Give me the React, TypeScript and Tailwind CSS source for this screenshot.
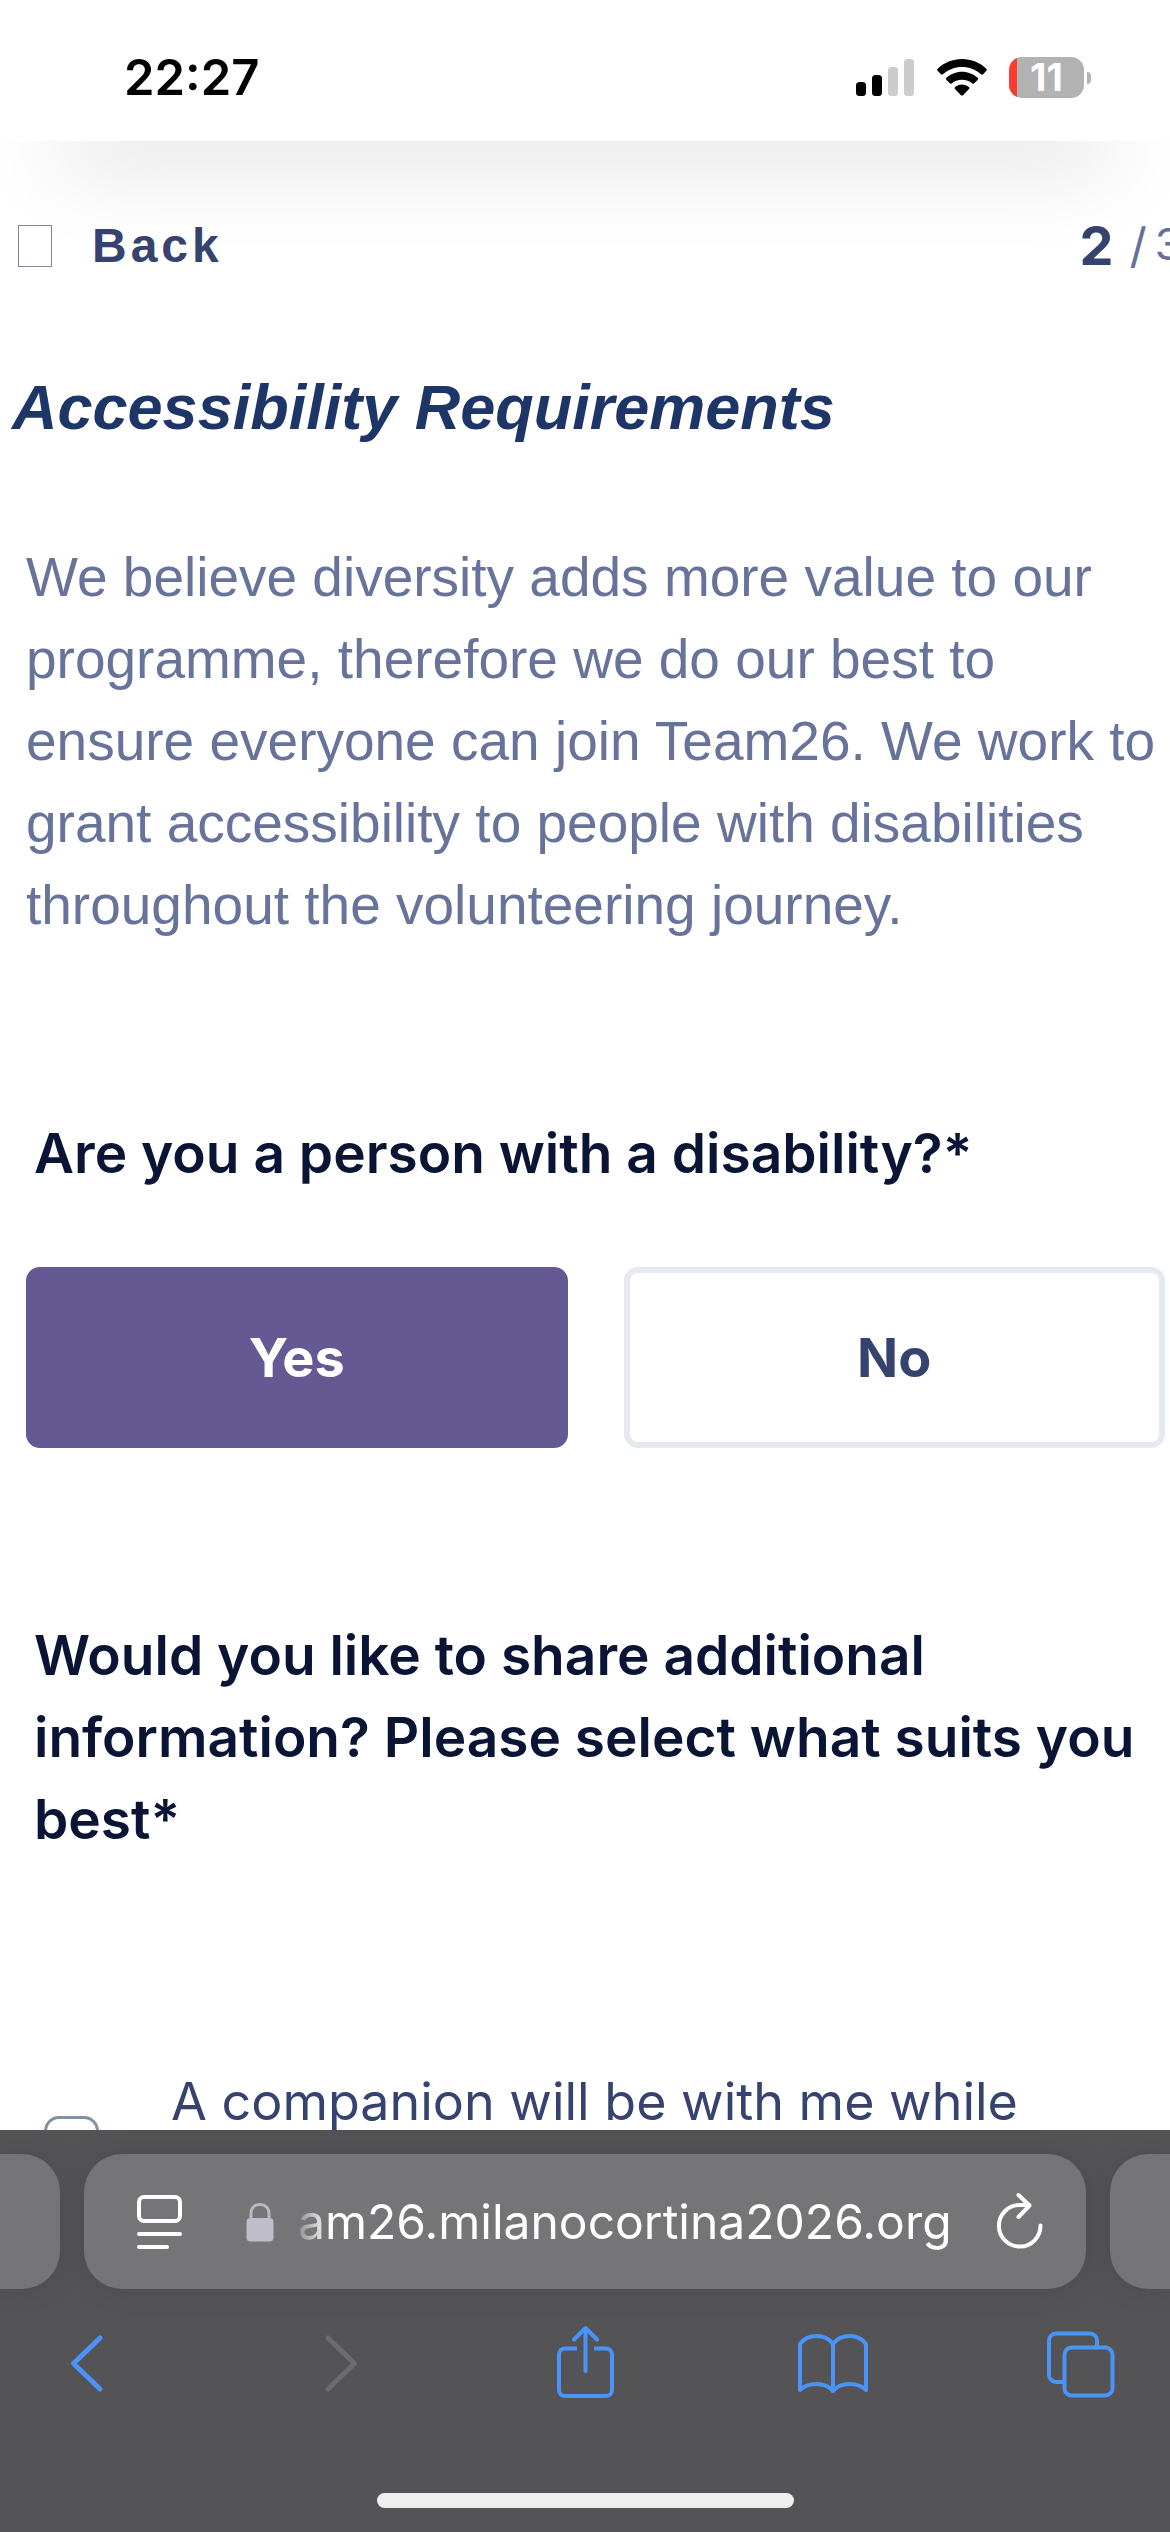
import React, { useState } from 'react';

const StatusBar: React.FC = () => (
  <header className="relative z-10 h-[141px] shrink-0 bg-white flex items-center justify-between pl-[124px] pr-[79px] pt-[14px] shadow-[0_70px_90px_-60px_rgba(0,0,0,0.32)]">
    <span className="text-[49px] leading-[60px] font-semibold text-black">22:27</span>
    <div className="flex items-center">
      {/* Signal */}
      <svg width="58" height="38" viewBox="0 0 58 38" className="mr-[23px]">
        <rect x="0" y="23" width="10" height="14" rx="3.5" fill="#000" />
        <rect x="16" y="16" width="10" height="21" rx="3.5" fill="#000" />
        <rect x="32" y="8" width="10" height="29" rx="3.5" fill="#ccc" />
        <rect x="48" y="0" width="10" height="37" rx="3.5" fill="#ccc" />
      </svg>
      {/* Wifi */}
      <svg width="50" height="38" viewBox="0 0 50 38" className="mr-[22px]">
        <path d="M25 0c9.300 0 17.900 3.600 24.300 9.700.7.600.7 1.500.1 2.100l-3.300 3.400c-.6.600-1.400.6-2 .1C39 10.600 32.300 8 25 8S11 10.600 5.900 15.300c-.6.500-1.400.5-2-.1L.6 11.800c-.6-.6-.6-1.500.1-2.100C7.100 3.600 15.700 0 25 0z" />
        <path d="M25 12.700c6 0 11.500 2.300 15.600 6.100.6.600.6 1.500 0 2.100l-3.400 3.400c-.5.500-1.300.5-1.900.1-2.700-2.400-6.300-3.700-10.300-3.700s-7.600 1.300-10.300 3.700c-.6.400-1.400.4-1.900-.1l-3.400-3.400c-.6-.6-.6-1.500 0-2.100 4.100-3.800 9.600-6.100 15.600-6.100z" />
        <path d="M25 25.500c2.600 0 5 .9 6.900 2.400.7.600.7 1.400.1 2L26 36.300c-.6.600-1.400.6-2 0L18 29.900c-.6-.6-.6-1.400.1-2 1.900-1.500 4.300-2.400 6.900-2.400z" />
      </svg>
      {/* Battery */}
      <div className="h-[41px] w-[75px] rounded-[13px] bg-linear-to-r from-[#ff3b30] from-[8px] to-[#b2b2b2] to-[8px] flex items-center justify-center">
        <span className="text-[38px] leading-[41px] font-bold text-white">11</span>
      </div>
      <div className="ml-[3px] h-3 w-1 rounded-r-full bg-[#b2b2b2]" />
    </div>
  </header>
);

interface ChoiceButtonProps {
  label: string;
  selected: boolean;
  onClick: () => void;
}

const ChoiceButton: React.FC<ChoiceButtonProps> = ({ label, selected, onClick }) => (
  <button
    type="button"
    aria-pressed={selected}
    onClick={onClick}
    className={`h-[181px] rounded-[14px] border-[6px] text-[54px] leading-[82px] font-bold ${
      selected ? 'border-[#655993] bg-[#655993] text-white' : 'border-[#e5eaf0] bg-white text-[#36436f]'
    }`}
  >
    {label}
  </button>
);

const BrowserBar: React.FC = () => (
  <footer className="shrink-0 bg-[#545456] pt-6 pb-6">
    <div className="flex gap-6">
      <div className="h-[135px] w-[60px] rounded-r-[38px] bg-[#757577] shadow-[0_0_30px_rgba(0,0,0,0.1)]" />
      <div className="h-[135px] flex-1 min-w-0 rounded-[38px] bg-[#757577] shadow-[0_0_30px_rgba(0,0,0,0.1)] flex items-center pl-[52px] pr-[42px]">
        <button type="button" aria-label="Page menu" className="mr-[62px]">
          <svg width="48" height="56" viewBox="0 0 48 56" fill="none" stroke="#fff" strokeWidth="4" strokeLinecap="round">
            <rect x="3" y="3" width="41" height="24" rx="5" />
            <path d="M3 40h41M3 53h28" />
          </svg>
        </button>
        <svg width="28" height="40" viewBox="0 0 28 40" className="mr-6 shrink-0">
          <path d="M5 18v-6.500C5 5.500 9 2.500 14 2.500s9 3 9 9V18" fill="none" stroke="#b9b8c0" strokeWidth="3" />
          <rect x="0.500" y="16" width="27" height="23.500" rx="4" fill="#bfbdca" />
        </svg>
        <button
          type="button"
          className="flex-1 min-w-0 text-left whitespace-nowrap text-[48px] leading-[64px] text-white mask-[linear-gradient(to_right,rgba(0,0,0,0.2),#000_32px)]"
        >
          am26.milanocortina2026.org
        </button>
        <button type="button" aria-label="Reload">
          <svg width="48" height="58" viewBox="0 0 48 58" fill="none" stroke="#fff" strokeWidth="4" strokeLinecap="round" strokeLinejoin="round">
            <path d="M44.500 32.500A20.800 20.800 0 1 1 23.500 12h9.500" />
            <path d="M22.500 2l11 10.500-11 11.500" />
          </svg>
        </button>
      </div>
      <div className="h-[135px] w-[60px] rounded-l-[38px] bg-[#757577] shadow-[0_0_30px_rgba(0,0,0,0.1)]" />
    </div>

    <nav className="mt-[30px] px-[52px] flex items-center justify-between text-[#4b94f7]">
      <button type="button" aria-label="Previous page">
        <svg width="72" height="88" viewBox="0 0 72 88" fill="none" stroke="currentColor" strokeWidth="5" strokeLinecap="round" strokeLinejoin="round">
          <path d="M48 19L21.500 44.500 48 70" />
        </svg>
      </button>
      <button type="button" aria-label="Next page" disabled className="text-[#6c6c6e]">
        <svg width="72" height="88" viewBox="0 0 72 88" fill="none" stroke="currentColor" strokeWidth="5" strokeLinecap="round" strokeLinejoin="round">
          <path d="M27 19l26.500 25.500L27 70" />
        </svg>
      </button>
      <button type="button" aria-label="Share">
        <svg width="72" height="88" viewBox="0 0 72 88" fill="none" stroke="currentColor" strokeWidth="4" strokeLinecap="round" strokeLinejoin="round">
          <path d="M28 29.500H16a6 6 0 0 0-6 6v35.500a6 6 0 0 0 6 6h41a6 6 0 0 0 6-6V35.500a6 6 0 0 0-6-6H45" strokeLinecap="butt" />
          <path d="M36.500 52V9.500M25 20.500L36.500 9l11.500 11.500" />
        </svg>
      </button>
      <button type="button" aria-label="Bookmarks">
        <svg width="72" height="88" viewBox="0 0 72 88" fill="none" stroke="currentColor" strokeWidth="4" strokeLinecap="round" strokeLinejoin="round">
          <path d="M35 25C31 19.500 25 17 18.500 17S6 19.500 2 25v46c4-4 10-6 16.500-6S31 67 35 72c4-5 10-7 16.500-7S64 67 68 71V25c-4-5.500-10-8-16.500-8S39 19.500 35 25z" />
          <path d="M35 25v47" />
        </svg>
      </button>
      <button type="button" aria-label="Tabs">
        <svg width="72" height="88" viewBox="0 0 72 88" fill="none" stroke="currentColor" strokeWidth="4" strokeLinejoin="round">
          <rect x="18.500" y="28.500" width="48" height="48" rx="7" />
          <path d="M51 28v-6.500a7 7 0 0 0-7-7H10a7 7 0 0 0-7 7V56a7 7 0 0 0 7 7h8.500" />
        </svg>
      </button>
    </nav>

    <div className="mt-[86px] mx-auto h-[15px] w-[417px] rounded-full bg-[#efefef]" />
  </footer>
);

const App: React.FC = () => {
  const [disability, setDisability] = useState<'yes' | 'no'>('yes');
  const [companion, setCompanion] = useState(false);

  return (
    <div className="h-screen flex flex-col bg-white overflow-hidden font-['Inter',sans-serif]">
      <StatusBar />

      <main className="flex-1 min-h-0 overflow-x-hidden overflow-y-auto [scrollbar-width:none] pt-[70px]">
        <div className="h-[70px] pl-[18px] flex items-center justify-between">
          <button type="button" className="flex items-center gap-10 text-[#36436f]">
            <span className="h-[42px] w-[34px] border border-[#8088a6]" />
            <span className="font-['Liberation_Sans',sans-serif] text-[48px] leading-[70px] font-bold tracking-[4px]">Back</span>
          </button>
          <div className="-mr-3 flex items-center whitespace-nowrap text-[#66719a]">
            <span className="mr-4 text-[54px] leading-[70px] font-bold text-[#36436f]">2</span>
            <span className="mr-2 text-[48px] leading-[70px]">/</span>
            <span className="pb-1 text-[44px] leading-[66px]">3</span>
          </div>
        </div>

        <h1 className="mt-[86px] pl-3 font-['Liberation_Sans',sans-serif] text-[63px] leading-[80px] font-bold italic text-[#1d3567]">
          Accessibility Requirements
        </h1>

        <p className="mt-[89px] pl-[26px] font-['Liberation_Sans',sans-serif] text-[55px] leading-[82px] text-[#67739a]">
          We believe diversity adds more value to our programme, therefore we do our best to ensure everyone can join
          Team26. We work to grant accessibility to people with disabilities throughout the volunteering journey.
        </p>

        <h2 className="mt-[166px] pl-[34px] text-[55px] leading-[82px] font-semibold text-[#0a1435]">
          Are you a person with a disability?*
        </h2>
        <div className="mt-[73px] pl-[26px] pr-[5px] grid grid-cols-2 gap-14">
          <ChoiceButton label="Yes" selected={disability === 'yes'} onClick={() => setDisability('yes')} />
          <ChoiceButton label="No" selected={disability === 'no'} onClick={() => setDisability('no')} />
        </div>

        <h2 className="mt-[166px] pl-[34px] text-[55px] leading-[82px] font-semibold text-[#0a1435]">
          Would you like to share additional information? Please select what suits you best*
        </h2>

        <label className="mt-[201px] pl-11 flex items-start gap-[72px] text-[52px] leading-[82px] text-[#36436f]">
          <input
            type="checkbox"
            checked={companion}
            onChange={(e) => setCompanion(e.target.checked)}
            className="mt-[55px] size-[55px] shrink-0 appearance-none rounded-[15px] border-[3px] border-[#8191a8] bg-white checked:bg-[#655993]"
          />
          A companion will be with me while
        </label>
      </main>

      <BrowserBar />
    </div>
  );
};

export default App;
